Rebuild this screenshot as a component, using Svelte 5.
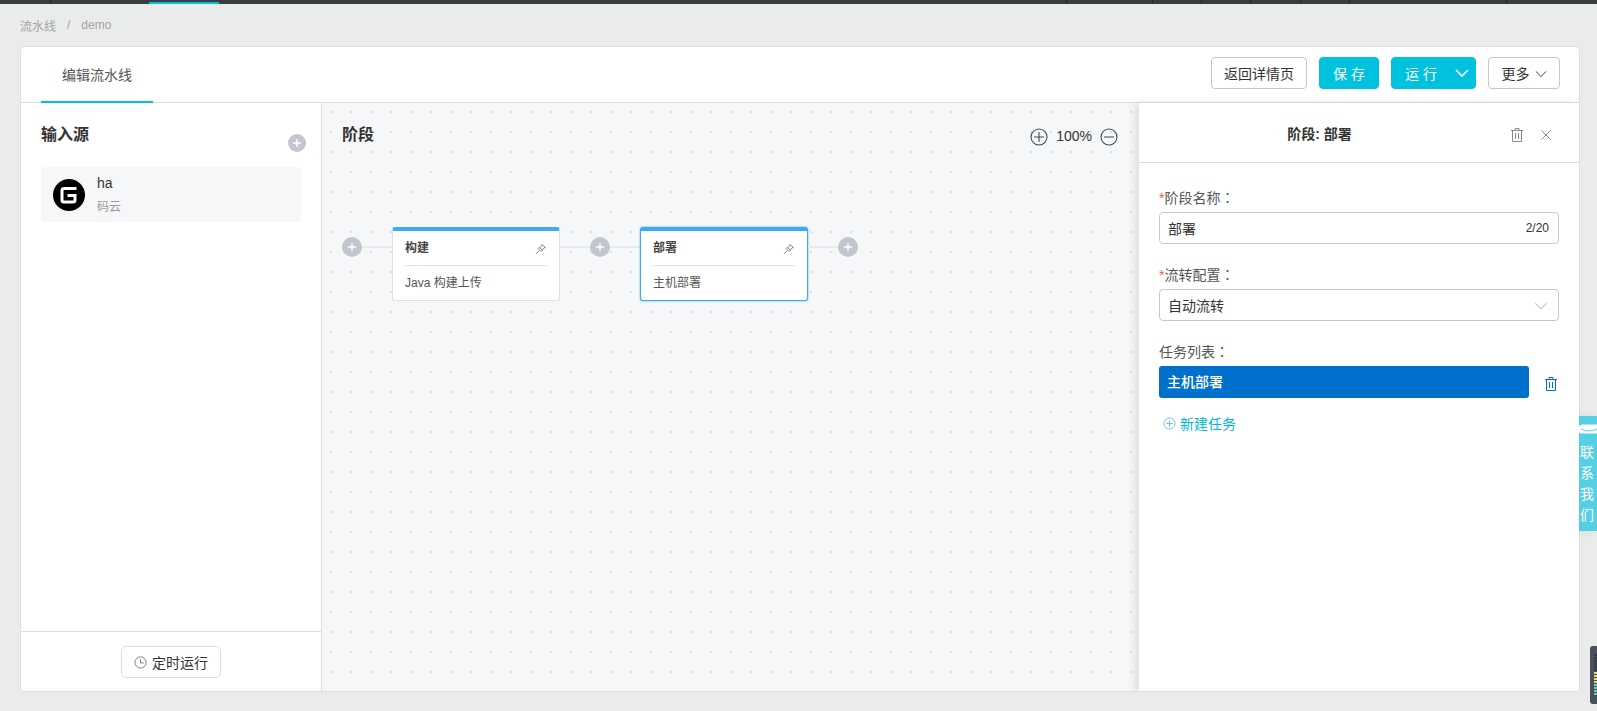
<script>
  const stages = [
    { name: '构建', task: 'Java 构建上传', active: false },
    { name: '部署', task: '主机部署', active: true }
  ]
  const ticks = [1066, 1152, 1201, 1250, 1300, 1349, 1506]
</script>

{#snippet trash(cls)}
  <svg class={cls} viewBox="0 0 14 14" width="14" height="14" fill="none" stroke="currentColor">
    <path d="M1 2.500h12M5 2.500v-2h4v2M2.500 2.500v11h9v-11M5.500 5v6M8.500 5v6" />
  </svg>
{/snippet}

{#snippet chevron(cls)}
  <svg class={cls} viewBox="0 0 14 8" width="14" height="8" fill="none" stroke="currentColor" stroke-width="1.2">
    <path d="M1 1l6 6 6-6" />
  </svg>
{/snippet}

{#snippet plus()}
  <span class="plus">
    <svg viewBox="0 0 10 10" width="10" height="10" stroke="#fff" stroke-width="1.4"><path d="M5 1v8M1 5h8" /></svg>
  </span>
{/snippet}

{#snippet pin()}
  <svg class="pin" viewBox="0 0 12 12" width="12" height="12" fill="none" stroke="#888">
    <path d="M7 1.500l3.500 3-1.500.5-3 3.500-3-3 3.500-2.500zM3.800 8L1 11.200M5 5l2.500 2" />
  </svg>
{/snippet}

<div class="page">
  <div class="topbar">
    <span class="top-active"></span>
    {#each ticks as x}
      <span class="tick" style="left: {x}px"></span>
    {/each}
    <span class="tick" style="left: 50px"></span>
  </div>

  <div class="crumbs">
    <span>流水线</span>
    <span class="sep">/</span>
    <span>demo</span>
  </div>

  <div class="card">
    <header class="head">
      <div class="tab">编辑流水线</div>
      <div class="actions">
        <button class="btn">返回详情页</button>
        <button class="btn primary save">保 存</button>
        <button class="btn primary run">
          <span>运 行</span>
          {@render chevron('run-arrow')}
        </button>
        <button class="btn more">
          更多
          {@render chevron('more-arrow')}
        </button>
      </div>
    </header>

    <div class="body">
      <aside class="sources">
        <div class="sources-main">
          <div class="sources-head">
            <h3>输入源</h3>
            {@render plus()}
          </div>
          <div class="source">
            <svg class="logo" viewBox="0 0 32 32" width="32" height="32">
              <circle cx="16" cy="16" r="16" fill="#000" />
              <path d="M23.500 9.500H11a2 2 0 0 0-2 2V21a2 2 0 0 0 2 2h9a2 2 0 0 0 2-2v-4.500H14.500" fill="none" stroke="#fff" stroke-width="3" />
            </svg>
            <div class="source-text">
              <div class="source-name">ha</div>
              <div class="source-type">码云</div>
            </div>
          </div>
        </div>
        <div class="sources-foot">
          <button class="btn timer">
            <svg viewBox="0 0 14 14" width="13" height="13" fill="none" stroke="#777">
              <circle cx="7" cy="7" r="6" /><path d="M7 3.500V7.500H10.500" />
            </svg>
            定时运行
          </button>
        </div>
      </aside>

      <main class="canvas">
        <div class="canvas-head">
          <h3>阶段</h3>
          <div class="zoom">
            <svg viewBox="0 0 18 18" width="18" height="18" fill="none" stroke="#3d4a55" stroke-width="1.100">
              <circle cx="9" cy="9" r="8" /><path d="M9 4v10M4 9h10" />
            </svg>
            <span class="zoom-value">100%</span>
            <svg viewBox="0 0 18 18" width="18" height="18" fill="none" stroke="#3d4a55" stroke-width="1.100">
              <circle cx="9" cy="9" r="8" /><path d="M4 9h10" />
            </svg>
          </div>
        </div>
        <div class="flow">
          {@render plus()}
          {#each stages as stage}
            <span class="link"></span>
            <div class="stage" class:active={stage.active}>
              <div class="stage-head">
                <b>{stage.name}</b>
                {@render pin()}
              </div>
              <div class="stage-task">{stage.task}</div>
            </div>
            <span class="link"></span>
            {@render plus()}
          {/each}
        </div>
      </main>

      <section class="panel">
        <div class="panel-head">
          <b>阶段: 部署</b>
          <div class="panel-tools">
            {@render trash('tool')}
            <svg class="tool" viewBox="0 0 12 12" width="12" height="12" fill="none" stroke="currentColor">
              <path d="M1.500 1.500l9 9M10.500 1.500l-9 9" />
            </svg>
          </div>
        </div>
        <div class="form">
          <div class="field-label"><i>*</i>阶段名称<span class="colon">：</span></div>
          <div class="input">
            <span>部署</span>
            <span class="count">2/20</span>
          </div>
          <div class="field-label"><i>*</i>流转配置<span class="colon">：</span></div>
          <div class="input">
            <span>自动流转</span>
            {@render chevron('select-arrow')}
          </div>
          <div class="field-label">任务列表<span class="colon">：</span></div>
          <div class="task-row">
            <div class="task">主机部署</div>
            {@render trash('task-trash')}
          </div>
          <div class="new-task">
            <svg viewBox="0 0 14 14" width="13" height="13" fill="none" stroke="#6cbfe0">
              <circle cx="7" cy="7" r="6" /><path d="M7 3.500v7M3.500 7h7" />
            </svg>
            新建任务
          </div>
        </div>
      </section>
    </div>
  </div>

  <div class="contact">
    <svg class="contact-icon" viewBox="0 0 18 10" width="18" height="10">
      <path d="M0 4a3.500 3.500 0 0 1 3.500-3.500H18v9H3.500A3.500 3.500 0 0 1 0 4z" fill="#fff" />
      <path d="M2 5q7 4 16 0" fill="none" stroke="#55cfe3" />
    </svg>
    <span>联</span><span>系</span><span>我</span><span>们</span>
  </div>

  <div class="meter">
    {#each Array(14) as _, i}
      <span class:yellow={i >= 6 && i < 10} class:green={i >= 10}></span>
    {/each}
  </div>
</div>

<style>
  :global(body) {
    margin: 0;
    overflow: hidden;
    background: #eaecec;
  }

  .page {
    position: relative;
    display: flex;
    flex-direction: column;
    height: 711px;
    font-family: "Liberation Sans", "Noto Sans CJK SC", sans-serif;
    font-size: 14px;
    color: #333;
    overflow: hidden;
  }

  .topbar {
    position: relative;
    height: 4px;
    flex: none;
    background: #373d41;
  }

  .top-active {
    position: absolute;
    left: 149px;
    bottom: 0;
    width: 70px;
    height: 2px;
    background: #00c1de;
  }

  .tick {
    position: absolute;
    top: 0;
    width: 1px;
    height: 4px;
    background: #23272a;
  }

  .crumbs {
    display: flex;
    align-items: center;
    gap: 11px;
    flex: none;
    height: 42px;
    padding-left: 20px;
    font-size: 12px;
    color: #a3a3a3;
  }

  .card {
    display: flex;
    flex-direction: column;
    flex: none;
    height: 646px;
    margin: 0 17px 0 20px;
    box-sizing: border-box;
    background: #fff;
    border: 1px solid #dcdddd;
    border-radius: 4px;
    overflow: hidden;
  }

  .head {
    display: flex;
    align-items: flex-start;
    justify-content: space-between;
    flex: none;
    height: 56px;
    box-sizing: border-box;
    padding: 10px 19px 0 20px;
    border-bottom: 1px solid #dcdddd;
  }

  .tab {
    box-sizing: border-box;
    width: 112px;
    height: 56px;
    margin-top: -10px;
    padding-top: 17px;
    text-align: center;
    color: #555;
    border-bottom: 2px solid #00c1de;
  }

  .actions {
    display: flex;
    gap: 12px;
  }

  .btn {
    display: flex;
    align-items: center;
    justify-content: center;
    height: 32px;
    padding: 0 12px;
    font: inherit;
    color: #333;
    background: #fff;
    border: 1px solid #c4c6c8;
    border-radius: 4px;
  }

  .primary {
    color: #fff;
    background: #00c1de;
    border-color: #00c1de;
  }

  .save {
    width: 60px;
  }

  .run {
    justify-content: space-between;
    width: 85px;
    padding: 0 6px 0 13px;
  }

  .run-arrow {
    color: #fff;
    stroke-width: 1.600;
  }

  .more {
    gap: 5px;
    width: 72px;
    padding: 0;
  }

  .more-arrow {
    color: #777;
    width: 12px;
    margin-top: 2px;
  }

  .body {
    display: flex;
    flex: 1;
    min-height: 0;
  }

  .sources {
    display: flex;
    flex-direction: column;
    flex: none;
    width: 301px;
    box-sizing: border-box;
    border-right: 1px solid #dcdddd;
  }

  .sources-main {
    flex: 1;
    padding: 21px 20px 0;
  }

  .sources-head {
    display: flex;
    justify-content: space-between;
    margin-bottom: 13px;
    height: 30px;
  }

  .sources-head .plus {
    width: 18px;
    height: 18px;
    margin: 10px -5px 0 0;
  }

  h3 {
    margin: 0;
    font-size: 16px;
    line-height: 22px;
    font-weight: bold;
    color: #333;
  }

  .source {
    display: flex;
    align-items: center;
    gap: 12px;
    height: 55px;
    padding-left: 12px;
    background: #f6f7f9;
    border-radius: 4px;
  }

  .logo {
    flex: none;
  }

  .source-name {
    line-height: 18px;
    margin-bottom: 6px;
  }

  .source-type {
    font-size: 12px;
    line-height: 18px;
    color: #9a9a9a;
  }

  .sources-foot {
    display: flex;
    justify-content: center;
    flex: none;
    height: 60px;
    padding-top: 14px;
    box-sizing: border-box;
    border-top: 1px solid #dcdddd;
  }

  .timer {
    gap: 5px;
    width: 100px;
    padding: 0;
    border-color: #dcdddd;
    border-radius: 5px;
  }

  .canvas {
    flex: 1;
    min-width: 0;
    padding: 21px 21px 0 20px;
    background-color: #f6f7f9;
    background-image: radial-gradient(circle, #dcdfe2 1px, transparent 1.2px);
    background-size: 20px 20px;
    background-position: -1px -1px;
  }

  .canvas-head {
    display: flex;
    justify-content: space-between;
    height: 103px;
  }

  .zoom {
    display: flex;
    align-items: center;
    align-self: flex-start;
    gap: 8px;
    margin-top: 4px;
  }

  .zoom-value {
    margin-top: -3px;
  }

  .flow {
    display: flex;
    align-items: flex-start;
  }

  .plus {
    display: flex;
    align-items: center;
    justify-content: center;
    flex: none;
    width: 20px;
    height: 20px;
    border-radius: 50%;
    background: #c3c6ce;
  }

  .flow > .plus {
    margin-top: 10px;
  }

  .link {
    flex: none;
    width: 30px;
    height: 2px;
    margin-top: 19px;
    background: #e8eaed;
  }

  .stage {
    flex: none;
    box-sizing: border-box;
    width: 168px;
    height: 74px;
    padding: 0 12px;
    background: #fff;
    border: 1px solid #dcdfe3;
    border-top: 4px solid #3fa9f5;
    border-radius: 3px;
  }

  .stage.active {
    border-color: #3fa9f5;
    box-shadow: 0 0 2px #3fa9f5;
  }

  .stage-head {
    display: flex;
    align-items: center;
    justify-content: space-between;
    box-sizing: border-box;
    height: 35px;
    padding-bottom: 3px;
    font-size: 12px;
    color: #444;
    border-bottom: 1px solid #e3e4e6;
  }

  .pin {
    margin-top: 5px;
  }

  .stage-task {
    padding-top: 9px;
    font-size: 12px;
    line-height: 17px;
    color: #555;
  }

  .panel {
    flex: none;
    width: 440px;
    background: #fff;
    box-shadow: -4px 0 8px rgba(0, 0, 0, .1);
    z-index: 1;
  }

  .panel-head {
    position: relative;
    display: flex;
    align-items: center;
    justify-content: center;
    height: 60px;
    box-sizing: border-box;
    padding-right: 79px;
    font-size: 14px;
    color: #333;
    border-bottom: 1px solid #dcdde2;
  }

  .panel-tools {
    position: absolute;
    right: 27px;
    top: 25px;
    display: flex;
    align-items: center;
    gap: 16px;
    color: #888;
  }

  .form {
    padding: 26px 20px 0;
  }

  .field-label {
    height: 17px;
    line-height: 17px;
    margin-bottom: 6px;
    color: #555;
  }

  .field-label i {
    font-style: normal;
    color: #f25c3d;
  }

  .colon {
    font-family: "Noto Sans CJK TC", sans-serif;
  }

  .input {
    display: flex;
    align-items: center;
    justify-content: space-between;
    box-sizing: border-box;
    width: 400px;
    height: 32px;
    margin-bottom: 22px;
    padding: 0 9px 1px 8px;
    background: #fff;
    border: 1px solid #c4c6c8;
    border-radius: 4px;
  }

  .count {
    font-size: 12px;
  }

  .select-arrow {
    color: #c9cbcd;
    margin-top: 3px;
    width: 16px;
  }

  .task-row {
    display: flex;
    align-items: center;
    gap: 15px;
  }

  .task {
    box-sizing: border-box;
    width: 370px;
    height: 32px;
    line-height: 32px;
    padding-left: 8px;
    font-weight: 500;
    color: #fff;
    background: #0070cc;
    border-radius: 3px;
  }

  .task-trash {
    color: #0070cc;
    margin-top: 4px;
  }

  .new-task {
    display: flex;
    align-items: center;
    gap: 4px;
    margin: 15px 0 0 4px;
    color: #00b8d6;
  }

  .contact {
    position: absolute;
    right: 0;
    top: 416px;
    display: flex;
    flex-direction: column;
    align-items: center;
    gap: 4px;
    box-sizing: border-box;
    width: 21px;
    height: 115px;
    padding: 5px 0 0 1px;
    font-size: 14px;
    line-height: 17px;
    color: #fff;
    background: #55cfe3;
    box-shadow: -3px 0 8px rgba(0, 0, 0, .08);
  }

  .contact-icon {
    flex: none;
    margin: 3px 0 6px 2px;
  }

  .meter {
    position: absolute;
    right: 0;
    top: 646px;
    display: flex;
    flex-direction: column;
    gap: 1px;
    box-sizing: border-box;
    width: 7px;
    height: 58px;
    padding: 8px 0 0 4px;
    background: #4a505c;
    border-radius: 3px 0 0 3px;
  }

  .meter span {
    height: 2px;
    background: #333a45;
  }

  .meter .yellow {
    background: #e3dd6c;
  }

  .meter .green {
    background: #63d6b8;
  }
</style>
